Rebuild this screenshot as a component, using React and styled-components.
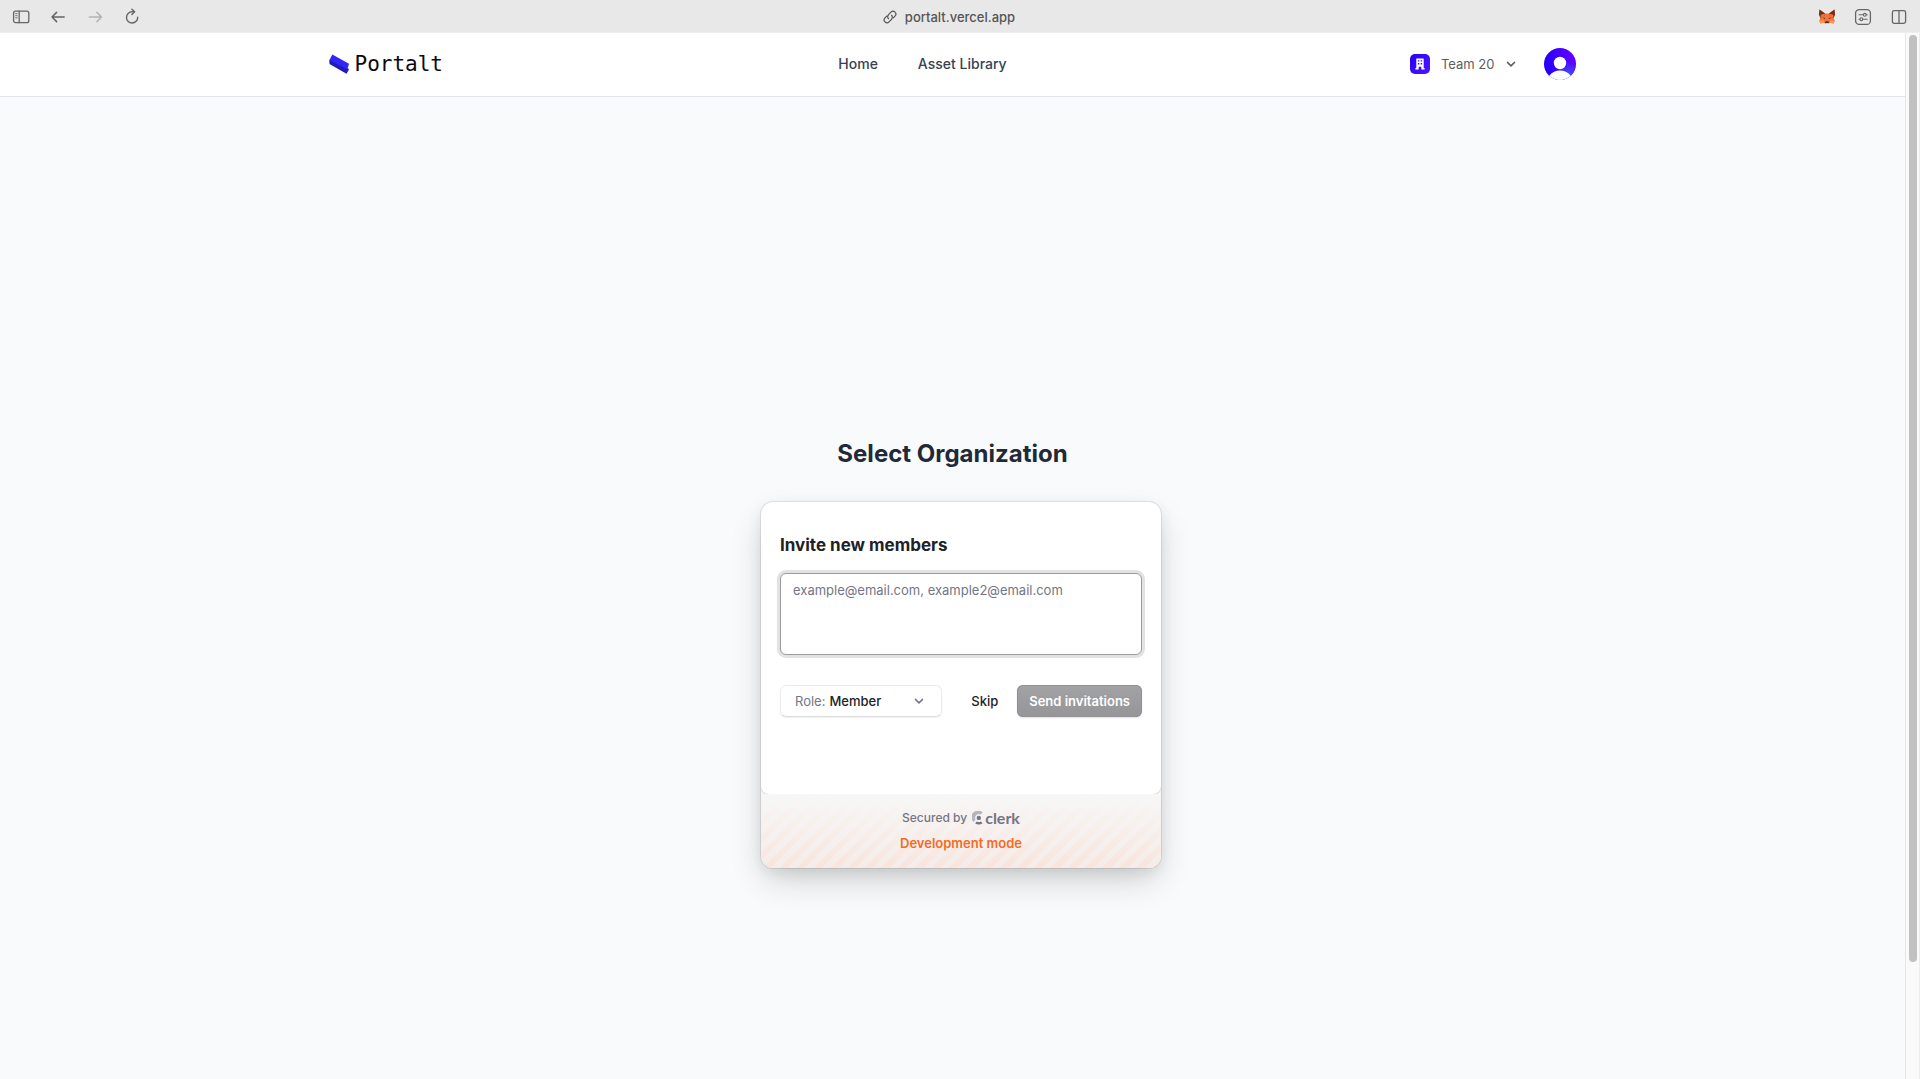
import React from "react";
import styled, { createGlobalStyle } from "styled-components";

const GlobalStyle = createGlobalStyle`
  *, *::before, *::after { box-sizing: border-box; }
  body {
    margin: 0;
    background: #f9fafb;
    font-family: Inter, "Liberation Sans", sans-serif;
    -webkit-font-smoothing: antialiased;
  }
  button, select, textarea { font: inherit; }
  h1, h2, p { margin: 0; }
`;

const Window = styled.div`
  display: flex;
  flex-direction: column;
  min-height: 100vh;
`;

const Toolbar = styled.div`
  display: grid;
  grid-template-columns: 1fr auto 1fr;
  align-items: center;
  height: 33px;
  padding: 1px 12px 0;
  background: #e8e8e8;
  border-bottom: 1px solid #eeeeee;
  color: #666666;
`;

const ToolGroup = styled.div`
  display: flex;
  align-items: center;
  justify-content: ${(p) => (p.$end ? "flex-end" : "flex-start")};
  gap: ${(p) => (p.$end ? 18 : 19)}px;
`;

const ToolButton = styled.button`
  display: flex;
  align-items: center;
  justify-content: center;
  width: 18px;
  height: 18px;
  padding: 0;
  border: 0;
  background: none;
  color: ${(p) => (p.disabled ? "#b3b3b3" : "#666666")};
`;

const Address = styled.div`
  display: flex;
  align-items: center;
  gap: 8px;
  padding-right: 22px;
  font-size: 13px;
  font-weight: 500;
  line-height: 16px;
  color: #555555;
`;

const Viewport = styled.div`
  display: flex;
  flex: 1;
`;

const Page = styled.div`
  display: flex;
  flex-direction: column;
  flex: 1;
  min-width: 0;
`;

const Scrollbar = styled.div`
  width: 15px;
  padding: 2px;
  background: #fafafa;
  border-left: 1px solid #e6e6e6;
  border-right: 1px solid #ececec;
`;

const Thumb = styled.div`
  width: 8px;
  height: 89%;
  margin-left: 1px;
  border-radius: 4px;
  background: #c1c1c1;
`;

const Header = styled.header`
  background: #ffffff;
  border-bottom: 1px solid #e2e4e8;
`;

const HeaderInner = styled.div`
  display: flex;
  align-items: center;
  justify-content: space-between;
  max-width: 1280px;
  height: 63px;
  margin: 0 auto;
  padding: 0 16px 1px;
`;

const Brand = styled.a`
  display: flex;
  align-items: center;
  gap: 5px;
  font-family: "DejaVu Sans Mono", monospace;
  font-size: 21px;
  line-height: 28px;
  color: #0a0a0a;
  text-decoration: none;
`;

const Nav = styled.nav`
  display: flex;
  gap: 40px;
`;

const NavLink = styled.a`
  font-size: 14px;
  font-weight: 500;
  line-height: 20px;
  color: #374151;
  text-decoration: none;
`;

const Account = styled.div`
  display: flex;
  align-items: center;
  gap: 19px;
`;

const TeamButton = styled.button`
  display: flex;
  align-items: center;
  gap: 11px;
  padding: 4px 8px;
  border: 0;
  background: none;
  color: #5e5e5e;
  font-size: 13px;
  line-height: 20px;
`;

const AvatarButton = styled.button`
  display: flex;
  padding: 0;
  border: 0;
  border-radius: 50%;
  background: none;
`;

const Main = styled.main`
  display: flex;
  flex: 1;
  flex-direction: column;
  align-items: center;
  justify-content: center;
  padding-top: 130px;
`;

const Title = styled.h1`
  margin-bottom: 32px;
  font-size: 24px;
  font-weight: 700;
  line-height: 32px;
  color: #1f2937;
`;

const CardSlot = styled.div`
  padding-left: 17px;
`;

const Card = styled.section`
  width: 400px;
  border-radius: 12px;
  background: #f7f7f7;
  overflow: hidden;
  box-shadow:
    0 0 0 1px rgba(0, 0, 0, 0.08),
    0 5px 15px rgba(0, 0, 0, 0.08),
    0 15px 35px -5px rgba(25, 28, 33, 0.2);
`;

const CardBody = styled.form`
  padding: 31px 19px 77px;
  background: #ffffff;
  border-radius: 12px 12px 8px 8px;
  box-shadow: 0 0 2px rgba(0, 0, 0, 0.16), 0 1px 1px rgba(0, 0, 0, 0.08);
`;

const CardTitle = styled.h2`
  margin-bottom: 16px;
  font-size: 17px;
  font-weight: 700;
  line-height: 24px;
  color: #212126;
`;

const Emails = styled.textarea`
  display: block;
  width: 100%;
  height: 82px;
  margin-bottom: 30px;
  padding: 7px 12px;
  border: 1px solid #9b9b9b;
  border-radius: 6px;
  outline: none;
  resize: none;
  font-size: 13px;
  line-height: 18px;
  color: #212126;
  background: #ffffff;
  box-shadow: 0 0 0 3px #e2e2e2;
  &::placeholder { color: #747686; opacity: 1; }
`;

const Actions = styled.div`
  display: flex;
  align-items: center;
  justify-content: space-between;
`;

const RoleField = styled.label`
  display: flex;
  align-items: center;
  gap: 4px;
  width: 162px;
  height: 32px;
  padding: 0 16px 0 14px;
  border: 1px solid #ebebeb;
  border-bottom-color: #dcdcdc;
  border-radius: 6px;
  font-size: 13px;
  line-height: 18px;
  color: #747686;
  box-shadow: 0 1px 1px rgba(0, 0, 0, 0.06);
`;

const RoleSelect = styled.select`
  flex: 1;
  min-width: 0;
  padding: 0;
  border: 0;
  outline: none;
  appearance: none;
  background: none;
  font-weight: 500;
  color: #212126;
`;

const ActionGroup = styled.div`
  display: flex;
  align-items: center;
  gap: 7px;
`;

const ActionButton = styled.button`
  height: 32px;
  padding: 0 12px;
  border: 0;
  border-radius: 6px;
  font-size: 13px;
  line-height: 18px;
  font-weight: ${(p) => (p.$primary ? 600 : 500)};
  color: ${(p) => (p.$primary ? "#ffffff" : "#212126")};
  background: ${(p) => (p.$primary ? "linear-gradient(#a2a3a5, #969498)" : "none")};
  box-shadow: ${(p) =>
    p.$primary ? "inset 0 0 0 1px #929295, 0 1px 2px rgba(0, 0, 0, 0.12)" : "none"};
`;

const CardFooter = styled.footer`
  display: flex;
  flex-direction: column;
  align-items: center;
  gap: 7px;
  padding: 15px 0 16px;
  background:
    linear-gradient(rgba(247, 247, 247, 1), rgba(247, 247, 247, 0)),
    repeating-linear-gradient(-45deg, #f8e5dc 0 6px, #f5ece9 6px 12px);
`;

const Secured = styled.p`
  display: flex;
  align-items: center;
  gap: 5px;
  font-size: 12px;
  font-weight: 500;
  line-height: 18px;
  color: #747686;
`;

const ClerkMark = styled.a`
  display: flex;
  align-items: center;
  gap: 2px;
  font-family: Lato, sans-serif;
  font-size: 16px;
  font-weight: 700;
  line-height: 18px;
  color: #747686;
  text-decoration: none;
`;

const DevMode = styled.p`
  font-size: 13px;
  font-weight: 600;
  line-height: 18px;
  color: #f36b24;
`;

const Line = ({ w = 18, h = 18, sw = 1.3, children, ...rest }) => (
  <svg
    width={w}
    height={h}
    viewBox={`0 0 ${w} ${h}`}
    fill="none"
    stroke="currentColor"
    strokeWidth={sw}
    strokeLinecap="round"
    strokeLinejoin="round"
    aria-hidden="true"
    {...rest}
  >
    {children}
  </svg>
);

const SidebarIcon = () => (
  <Line>
    <rect x="1.6" y="3.1" width="15.2" height="11.6" rx="2" />
    <path d="M7.2 3.1v11.6" />
    <path d="M3.6 5.6h1.6M3.6 7.7h1.6M3.6 9.8h1.6" strokeWidth="0.9" />
  </Line>
);

const BackIcon = () => (
  <Line sw={1.5}>
    <path d="M15.2 9H3M7.6 4.4 3 9l4.6 4.6" />
  </Line>
);

const ForwardIcon = () => (
  <Line sw={1.5}>
    <path d="M3.300 9h12.200M10.900 4.400 15.500 9l-4.600 4.600" />
  </Line>
);

const ReloadIcon = () => (
  <Line sw={1.4}>
    <path d="M14.700 9.300a5.600 5.600 0 1 1-5.600-5.500h2.300" />
    <path d="M8.900 1.200 11.600 3.800 8.900 6.500" />
  </Line>
);

const LinkIcon = () => (
  <Line w={14} h={14} sw={1.2}>
    <path d="M5.500 8.700a2.800 2.800 0 0 1 0-4L8 2.100a2.800 2.800 0 0 1 4 4L10.300 7.800" />
    <path d="M8.500 5.300a2.800 2.800 0 0 1 0 4L6 11.900a2.800 2.800 0 0 1-4-4L3.700 6.200" />
  </Line>
);

const FoxIcon = () => (
  <svg width="18" height="18" viewBox="0 0 18 18" aria-hidden="true">
    <path d="M1.500 1.500 7 5.400h4l5.500-3.900.5 5-1.300 3.200 1 3.600-1.200 2.200-3.500-.8-1.600 1.100H7.600L6 14.700l-3.500.8-1.200-2.200 1-3.600L1 6.500z" fill="#f5743a" />
    <path d="M1.500 1.500 7 5.400 6 9l-3.700.7L1 6.500zM16.500 1.500 11 5.400 12 9l3.700.7L17 6.500z" fill="#6b2f1c" />
    <path d="M2.800 6.800 7 5.400 6 9l-3.500.7zM15.200 6.800 11 5.400 12 9l3.500.7z" fill="#f0703a" />
    <path d="M1.300 13.300 6 12.300v2.400l-3.500.8zM16.700 13.300 12 12.300v2.400l3.500.8z" fill="#ff9a55" />
    <path d="M5.400 9.300 7.500 10.700 6 11.100zM12.600 9.300 10.500 10.700 12 11.100zM7.500 13.300h3l.4 1.700H7.100z" fill="#33343a" />
    <path d="M7.200 15h3.600l-.4.900H7.600z" fill="#d5c5bb" />
  </svg>
);

const TuneIcon = () => (
  <Line>
    <rect x="1.600" y="1.600" width="14.800" height="14.800" rx="3.500" />
    <path d="M5 6.800h4.200M12.300 6.800h.9M5 11.200h.9M8.900 11.200h4.300" strokeWidth="1.100" />
    <circle cx="10.800" cy="6.800" r="1.400" strokeWidth="1.100" />
    <circle cx="7.300" cy="11.200" r="1.400" strokeWidth="1.100" />
  </Line>
);

const SplitIcon = () => (
  <Line>
    <rect x="2.400" y="2.600" width="13.200" height="12.800" rx="1.800" />
    <path d="M9 2.600v12.800" />
  </Line>
);

const LogoIcon = () => (
  <svg width="21" height="20" viewBox="0 0 21 20" aria-hidden="true">
    <path d="M.3 6 2 5l17 9.500 1 1-2.500 4.200L.5 10z" fill="#2119b8" />
    <path d="M3.300.5 20 9.800l-1.800 5.700L.5 6z" fill="#3026f5" />
  </svg>
);

const ChevronIcon = () => (
  <Line w={12} h={12} sw={1.5}>
    <path d="m2.500 4.400 3.500 3.500 3.500-3.500" />
  </Line>
);

const TeamIcon = () => (
  <svg width="20" height="20" viewBox="0 0 20 20" aria-hidden="true">
    <defs>
      <linearGradient id="team" x1="0" y1="0" x2="1" y2="0.600">
        <stop offset="0" stopColor="#2400ff" />
        <stop offset="1" stopColor="#4a14fa" />
      </linearGradient>
    </defs>
    <rect width="20" height="20" rx="5" fill="url(#team)" />
    <path
      fillRule="evenodd"
      fill="#ffffff"
      d="M6.300 4.500h7.400v9.600h.9v1.300h-3.300v-2.600H8.700v2.600H5.400v-1.300h.9zM7.900 6.200v1.400h1.400V6.200zM10.700 6.200v1.400h1.400V6.200zM7.900 9.100v1.400h1.400V9.100zM10.700 9.100v1.400h1.400V9.100z"
    />
  </svg>
);

const UserIcon = () => (
  <svg width="32" height="32" viewBox="0 0 32 32" aria-hidden="true">
    <defs>
      <linearGradient id="user" x1="0" y1="0.300" x2="1" y2="0.100">
        <stop offset="0" stopColor="#2400ff" />
        <stop offset="1" stopColor="#6a00ff" />
      </linearGradient>
      <radialGradient id="glow" cx="0.750" cy="0.850" r="0.450">
        <stop offset="0" stopColor="#3a55ff" />
        <stop offset="1" stopColor="#3a55ff" stopOpacity="0" />
      </radialGradient>
      <clipPath id="round">
        <circle cx="16" cy="16" r="16" />
      </clipPath>
    </defs>
    <g clipPath="url(#round)">
      <rect width="32" height="32" fill="url(#user)" />
      <rect width="32" height="32" fill="url(#glow)" />
      <circle cx="16" cy="15" r="6.200" fill="#ffffff" />
      <path d="M0 34 5.500 27.500C8 24 12 22.500 16 22.500s8 1.500 10.500 5L32 34z" fill="#ffffff" />
    </g>
  </svg>
);

const ClerkIcon = () => (
  <svg width="11" height="14" viewBox="0 0 11 14" aria-hidden="true">
    <path d="M10.600 1.400 8.600 3.400a3.900 3.900 0 0 0-5 5.400L1.400 10.900A6.500 6.500 0 0 1 10.600 1.400z" fill="#b4b5bf" />
    <circle cx="6.800" cy="6.900" r="2.200" fill="#747686" />
    <path d="M3 12.200 4.800 10.400a4.200 4.200 0 0 0 4 0l1.800 1.800a6.500 6.500 0 0 1-7.600 0z" fill="#747686" />
  </svg>
);

export default function App() {
  return (
    <Window>
      <GlobalStyle />
      <Toolbar>
        <ToolGroup>
          <ToolButton aria-label="Toggle sidebar"><SidebarIcon /></ToolButton>
          <ToolButton aria-label="Back"><BackIcon /></ToolButton>
          <ToolButton aria-label="Forward" disabled><ForwardIcon /></ToolButton>
          <ToolButton aria-label="Reload"><ReloadIcon /></ToolButton>
        </ToolGroup>
        <Address>
          <LinkIcon />
          <span>portalt.vercel.app</span>
        </Address>
        <ToolGroup $end>
          <ToolButton aria-label="Wallet"><FoxIcon /></ToolButton>
          <ToolButton aria-label="Site settings"><TuneIcon /></ToolButton>
          <ToolButton aria-label="Split view"><SplitIcon /></ToolButton>
        </ToolGroup>
      </Toolbar>
      <Viewport>
        <Page>
          <Header>
            <HeaderInner>
              <Brand href="#">
                <LogoIcon />
                <span>Portalt</span>
              </Brand>
              <Nav>
                <NavLink href="#home">Home</NavLink>
                <NavLink href="#assets">Asset Library</NavLink>
              </Nav>
              <Account>
                <TeamButton>
                  <TeamIcon />
                  <span>Team 20</span>
                  <ChevronIcon />
                </TeamButton>
                <AvatarButton aria-label="Account"><UserIcon /></AvatarButton>
              </Account>
            </HeaderInner>
          </Header>
          <Main>
            <Title>Select Organization</Title>
            <CardSlot>
              <Card>
                <CardBody onSubmit={(e) => e.preventDefault()}>
                  <CardTitle id="invite">Invite new members</CardTitle>
                  <Emails
                    aria-labelledby="invite"
                    placeholder="example@email.com, example2@email.com"
                  />
                  <Actions>
                    <RoleField>
                      <span>Role:</span>
                      <RoleSelect defaultValue="Member">
                        <option>Member</option>
                      </RoleSelect>
                      <ChevronIcon />
                    </RoleField>
                    <ActionGroup>
                      <ActionButton type="button">Skip</ActionButton>
                      <ActionButton type="submit" $primary disabled>
                        Send invitations
                      </ActionButton>
                    </ActionGroup>
                  </Actions>
                </CardBody>
                <CardFooter>
                  <Secured>
                    <span>Secured by</span>
                    <ClerkMark href="#clerk">
                      <ClerkIcon />
                      <span>clerk</span>
                    </ClerkMark>
                  </Secured>
                  <DevMode>Development mode</DevMode>
                </CardFooter>
              </Card>
            </CardSlot>
          </Main>
        </Page>
        <Scrollbar>
          <Thumb />
        </Scrollbar>
      </Viewport>
    </Window>
  );
}
